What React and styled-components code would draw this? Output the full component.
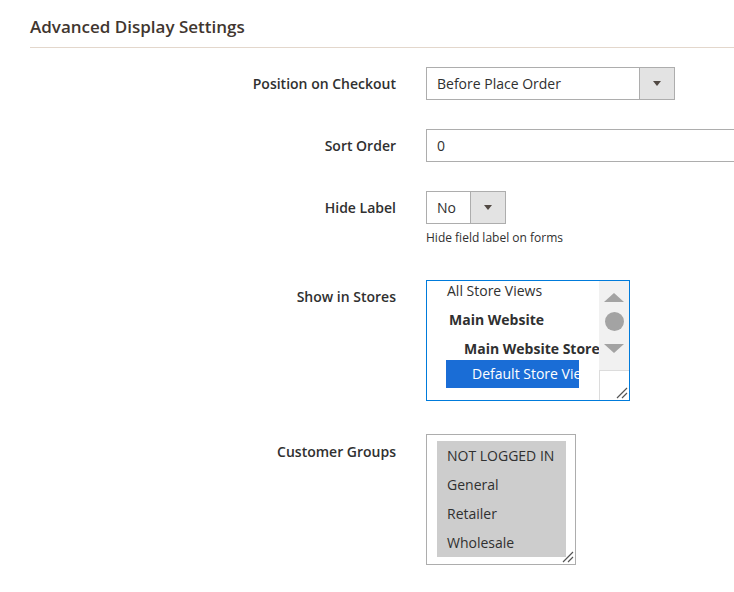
import React from "react";
import styled, { createGlobalStyle } from "styled-components";

const Global = createGlobalStyle`
  body { margin: 0; background: #fff; font-family: "Open Sans", sans-serif; color: #303030; }
`;
const Page = styled.div`padding: 14px 0 0 30px; width: 704px; overflow: hidden;`;
const Title = styled.h2`
  margin: 0; font-size: 17px; font-weight: 600; color: #41362f; line-height: 26px;
  padding-bottom: 7px; border-bottom: 1px solid #e3d7cc; margin-bottom: 19px;
`;
const Row = styled.div`
  display: grid; grid-template-columns: 366px 1fr; column-gap: 30px;
  margin-bottom: ${p => p.$mb}px;
`;
const Label = styled.label`
  text-align: right; font-size: 14px; font-weight: 600; color: #303030;
  padding-top: ${p => p.$pt || 7}px; line-height: 19px;
`;
const Field = styled.div`display: flex; flex-direction: column; align-items: flex-start;`;
const SelectBox = styled.div`
  display: flex; width: ${p => p.$w}px; height: 33px; box-sizing: border-box;
  border: 1px solid #adadad; background: #fff; font-size: 14px;
`;
const SelectText = styled.div`flex: 1; padding: 0 10px; line-height: 31px;`;
const Arrow = styled.div`
  width: 34px; background: #e3e3e3; border-left: 1px solid #adadad;
  display: flex; align-items: center; justify-content: center;
  &::after { content: ""; border-left: 4px solid transparent; border-right: 4px solid transparent; border-top: 5px solid #514943; }
`;
const Input = styled.div`
  width: 340px; height: 33px; box-sizing: border-box; border: 1px solid #adadad;
  font-size: 14px; line-height: 31px; padding: 0 10px;
`;
const Note = styled.div`font-size: 12px; color: #303030; margin-top: 5px; line-height: 18px;`;
const Multi = styled.div`
  position: relative; box-sizing: border-box; width: ${p => p.$w}px; height: ${p => p.$h}px;
  border: 1px solid ${p => p.$blue ? "#007bdb" : "#adadad"}; background: #fff; overflow: hidden;
  font-size: 14px;
`;
const StoreList = styled.div`padding: 0 0 0 20px;`;
const Opt = styled.div`
  height: ${p => p.$h || 29}px; line-height: 20px; box-sizing: border-box;
  padding-left: ${p => p.$indent || 0}px; font-weight: ${p => p.$bold ? 700 : 400};
  white-space: nowrap; color: #303030;
`;
const SelOpt = styled.div`
  width: 133px; height: 28px; line-height: 28px; overflow: hidden; white-space: nowrap;
  margin-left: -1px; padding-left: 26px; box-sizing: border-box;
  background: #1a6dd6; color: #fff;
`;
const Scroll = styled.div`
  position: absolute; right: 0; top: 0; width: 30px; height: 100%; background: #f1f1f1;
  display: flex; flex-direction: column; align-items: center;
`;
const Up = styled.div`margin-top: 12px; border-left: 10px solid transparent; border-right: 10px solid transparent; border-bottom: 9px solid #a3a3a3;`;
const Down = styled.div`margin-top: 13px; border-left: 10px solid transparent; border-right: 10px solid transparent; border-top: 9px solid #a3a3a3;`;
const Dot = styled.div`margin-top: 10px; width: 19px; height: 19px; border-radius: 50%; background: #a3a3a3;`;
const Corner = styled.div`
  position: absolute; right: 0; bottom: 0; width: 30px; height: 30px; background: #fff;
  border-left: 1px solid #dcdcdc; border-top: 1px solid #dcdcdc; box-sizing: border-box;
`;
const Grip = styled.svg`position: absolute; right: 1px; bottom: 1px;`;
const Groups = styled.div`
  margin: 6px 0 0 10px; width: 129px; height: 116px; background: #cdcdcd; padding-top: 7px; box-sizing: border-box;
`;
const GOpt = styled.div`padding-left: 10px; height: 29px; line-height: 16px; font-size: 14px;`;

const GripIcon = () => (
  <Grip width="14" height="14" viewBox="0 0 14 14">
    <path d="M13 3 L3 13 M13 8 L8 13" stroke="#555" strokeWidth="1.2" />
  </Grip>
);

export default function App() {
  return (
    <Page>
      <Global />
      <Title>Advanced Display Settings</Title>
      <Row $mb={29}>
        <Label>Position on Checkout</Label>
        <Field><SelectBox $w={249}><SelectText>Before Place Order</SelectText><Arrow /></SelectBox></Field>
      </Row>
      <Row $mb={29}>
        <Label>Sort Order</Label>
        <Field><Input>0</Input></Field>
      </Row>
      <Row $mb={33}>
        <Label>Hide Label</Label>
        <Field>
          <SelectBox $w={80}><SelectText>No</SelectText><Arrow /></SelectBox>
          <Note>Hide field label on forms</Note>
        </Field>
      </Row>
      <Row $mb={33}>
        <Label>Show in Stores</Label>
        <Field>
          <Multi $w={204} $h={121} $blue>
            <StoreList>
              <Opt>All Store Views</Opt>
              <Opt $bold $indent={2}>Main Website</Opt>
              <Opt $bold $indent={17} $h={21}>Main Website Store</Opt>
              <SelOpt>Default Store View</SelOpt>
            </StoreList>
            <Scroll><Up /><Dot /><Down /></Scroll>
            <Corner><GripIcon /></Corner>
          </Multi>
        </Field>
      </Row>
      <Row $mb={20}>
        <Label $pt={8}>Customer Groups</Label>
        <Field>
          <Multi $w={150} $h={131}>
            <Groups>
              <GOpt>NOT LOGGED IN</GOpt>
              <GOpt>General</GOpt>
              <GOpt>Retailer</GOpt>
              <GOpt>Wholesale</GOpt>
            </Groups>
            <GripIcon />
          </Multi>
        </Field>
      </Row>
    </Page>
  );
}
